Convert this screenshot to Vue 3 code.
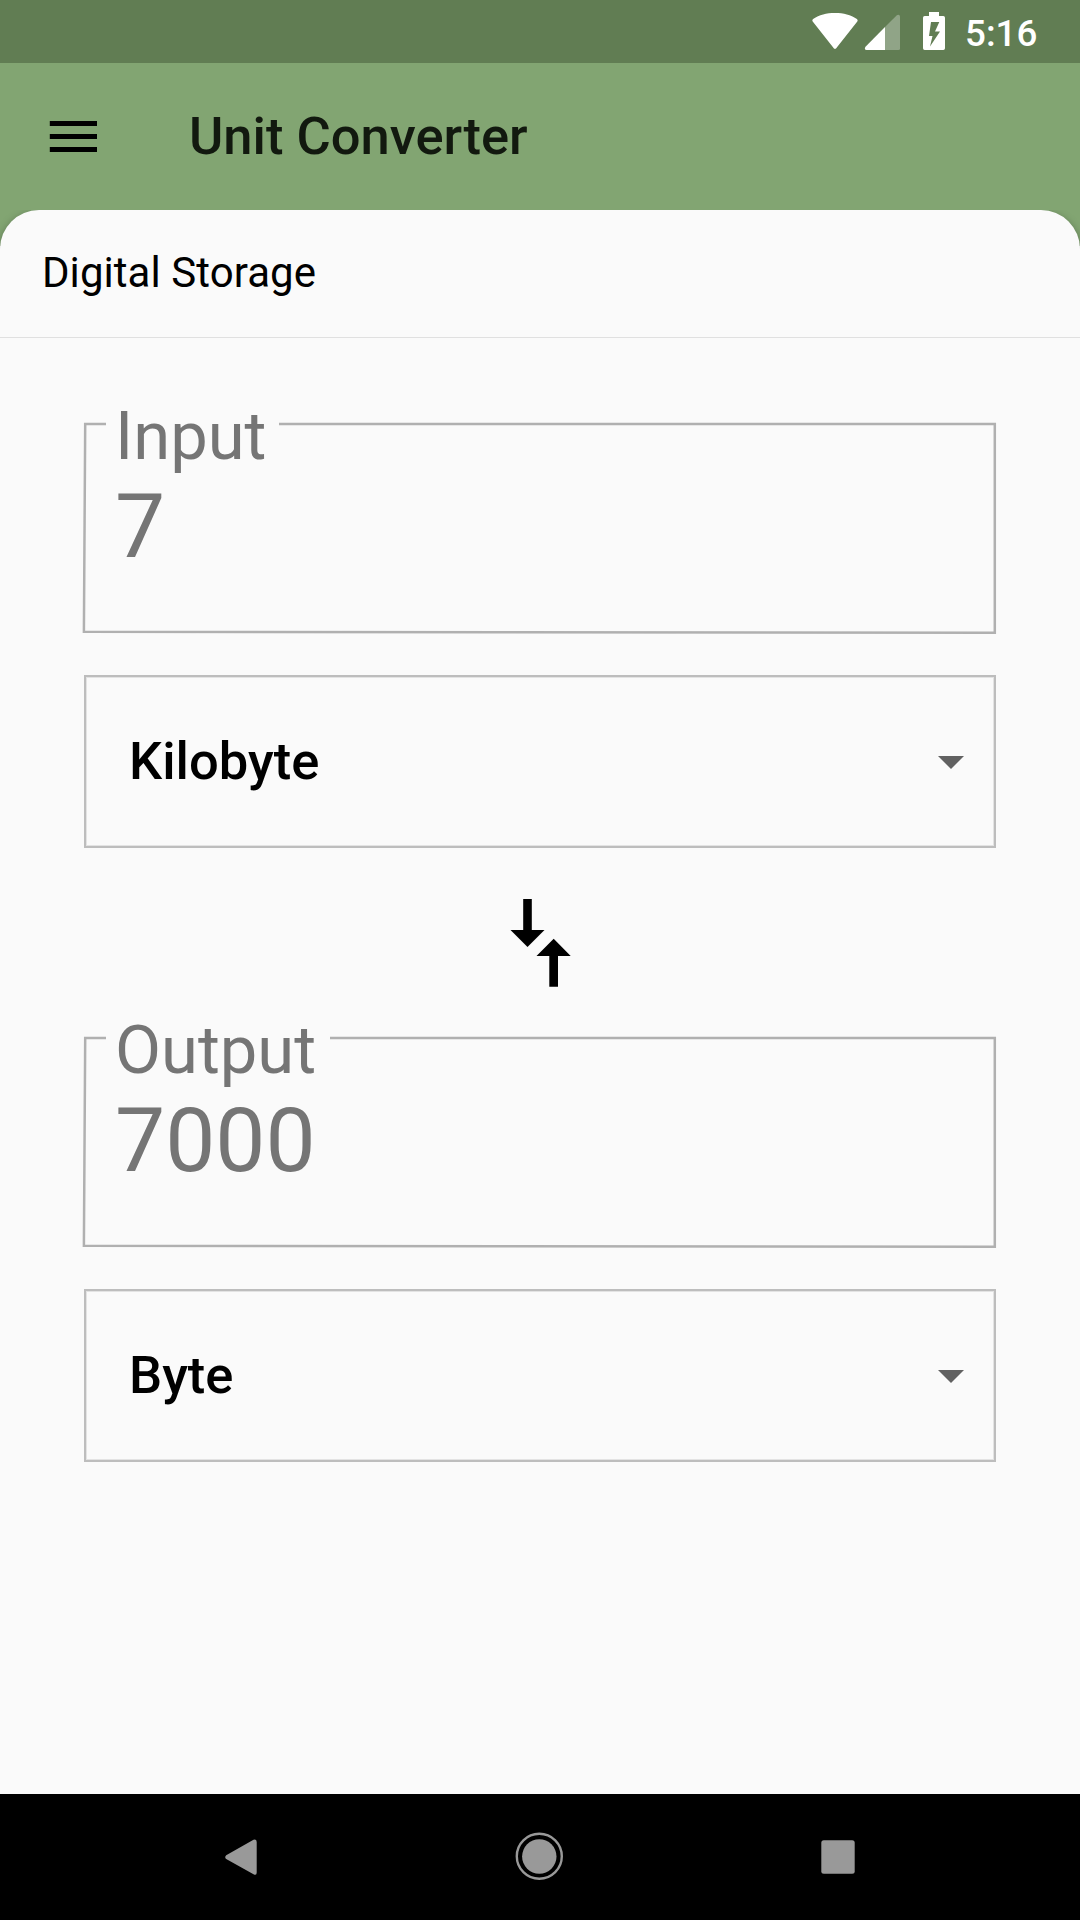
<script setup>
const groups = [
  { label: 'Input', value: '7', unit: 'Kilobyte', notch: 197 },
  { label: 'Output', value: '7000', unit: 'Byte', notch: 248 },
]
</script>

<template>
  <div class="screen">
    <div class="status">
      <svg class="status-icons" width="133" height="40" viewBox="812 12 133 40">
        <path fill="#fff" d="M812.900 21.700C812 20.500 812.200 19.500 813.500 18.700C819 15 826.500 13 835 13S851 15 856.500 18.700C857.800 19.500 858 20.500 857.100 21.700L837 47.300C835.600 49.400 834.400 49.400 833 47.300Z" />
        <path fill="#fff" opacity=".3" d="M885 27L896.800 15.300C898.300 14 900 14.700 900 16.800V48.500Q900 50 898.500 50H885Z" />
        <path fill="#fff" d="M885 27V50H866.500C864.800 50 864.300 48.300 865.500 46.800Z" />
        <path fill="#fff" fill-rule="evenodd" d="M929 12H939V16H943.300Q945 16 945 17.700V48.300Q945 50 943.300 50H924.700Q923 50 923 48.300V17.700Q923 16 924.700 16H929ZM931 22L929 36H932.500L930 46.500L940 31.500H935L939.300 22Z" />
      </svg>
      <span class="clock">5:16</span>
    </div>

    <header class="bar">
      <svg width="48" height="32" viewBox="0 0 48 32">
        <path d="M.8 1H48V6H.8ZM.8 14H48V19H.8ZM.8 27H48V32H.8Z" />
      </svg>
      <h1>Unit Converter</h1>
    </header>

    <main class="sheet-wrap">
      <div class="sheet">
        <div class="category">Digital Storage</div>
        <div class="form">
          <template v-for="(g, i) in groups" :key="g.label">
            <section class="group">
              <div class="field">
                <svg class="outline" width="916" height="214" viewBox="0 0 916 214">
                  <path :d="`M${g.notch} 4H912.800V212.700L1.900 211.700L3.200 4H24`" />
                </svg>
                <label>{{ g.label }}</label>
                <div class="value">{{ g.value }}</div>
              </div>
              <div class="select">
                <span>{{ g.unit }}</span>
                <svg width="26" height="13" viewBox="0 0 26 13"><path fill="#616161" d="M0 0H26L13 13Z" /></svg>
              </div>
            </section>
            <div v-if="i === 0" class="swap">
              <svg width="61" height="88" viewBox="510 898.300 61 88">
                <path d="M523.200 898.300H531.800V929.200H544.500L527.500 946.300L510.500 929.200H523.200ZM549.300 986V955.200H536.500L553.700 938.100L570.700 955.200H558V986Z" />
              </svg>
            </div>
          </template>
        </div>
      </div>
    </main>

    <nav class="nav">
      <svg width="1080" height="126" viewBox="0 1794 1080 126" fill="#999">
        <path d="M226.200 1855.300L253.500 1839.800Q256.700 1838.500 256.700 1842V1872.500Q256.700 1876 253.500 1874.200L226.200 1859Q224.200 1857.200 226.200 1855.300Z" />
        <circle cx="539.300" cy="1856.300" r="22.500" fill="none" stroke="#999" stroke-width="2.400" />
        <circle cx="539.300" cy="1856.500" r="17.200" />
        <rect x="821.300" y="1840.300" width="33.400" height="33.500" rx="2.500" />
      </svg>
    </nav>
  </div>
</template>

<style>
body { margin: 0; }
</style>

<style scoped>
.screen {
  display: flex;
  flex-direction: column;
  width: 1080px;
  height: 1920px;
  overflow: hidden;
  background: #fafafa;
  color: #000;
  font-family: Roboto, sans-serif;
}
svg { display: block; flex: none; }
.status {
  display: flex;
  height: 63px;
  box-sizing: border-box;
  justify-content: flex-end;
  padding: 12px 43px 0 0;
  background: #617d53;
}
.status-icons { margin-right: 20px; }
.clock {
  width: 72px;
  color: #fff;
  font-size: 36.750px;
  font-weight: 500;
  line-height: 43px;
  white-space: nowrap;
}
.bar {
  display: flex;
  box-sizing: border-box;
  align-items: center;
  height: 147px;
  padding: 0 0 1px 49px;
  background: #82a572;
}
h1 {
  margin: 0 0 0 92px;
  font-size: 52.500px;
  font-weight: 500;
  line-height: 62px;
  color: #12190f;
}
.sheet-wrap {
  flex: 1;
  background: linear-gradient(#82a572 36px, #fafafa 36px);
}
.sheet {
  height: 100%;
  border-radius: 39px 39px 0 0;
  background: #fafafa;
  box-shadow: 0 3px 9px rgba(0, 0, 0, .35);
  clip-path: inset(0);
}
.category {
  height: 127px;
  padding-left: 42px;
  border-bottom: 1px solid #e0e0e0;
  font-size: 42px;
  line-height: 125px;
  letter-spacing: .06px;
}
.form { padding: 82px 82px 0; }
.field {
  display: grid;
  height: 214px;
}
.field > * { grid-area: 1 / 1; }
.outline path { fill: none; stroke: #b0b0b0; stroke-width: 2.500; }
label, .value { color: #757575; padding-left: 33px; }
label { font-size: 66.900px; line-height: 78px; margin-top: -23px; }
.value { font-size: 89.250px; line-height: 104px; margin-top: 55px; }
.select {
  display: flex;
  box-sizing: border-box;
  align-items: center;
  justify-content: space-between;
  width: 912px;
  height: 173px;
  margin: 41px 0 0 2px;
  padding: 0 30px 0 43px;
  border: 2px solid #bdbdbd;
  box-shadow: inset 0 0 0 1px #e3e3e3;
  font-size: 52.500px;
  font-weight: 500;
}
.select span { margin-top: -1px; }
.select svg { margin-top: 2px; }
.swap {
  display: flex;
  justify-content: center;
  height: 135px;
  padding-top: 51px;
}
.nav { height: 126px; background: #000; }
</style>
